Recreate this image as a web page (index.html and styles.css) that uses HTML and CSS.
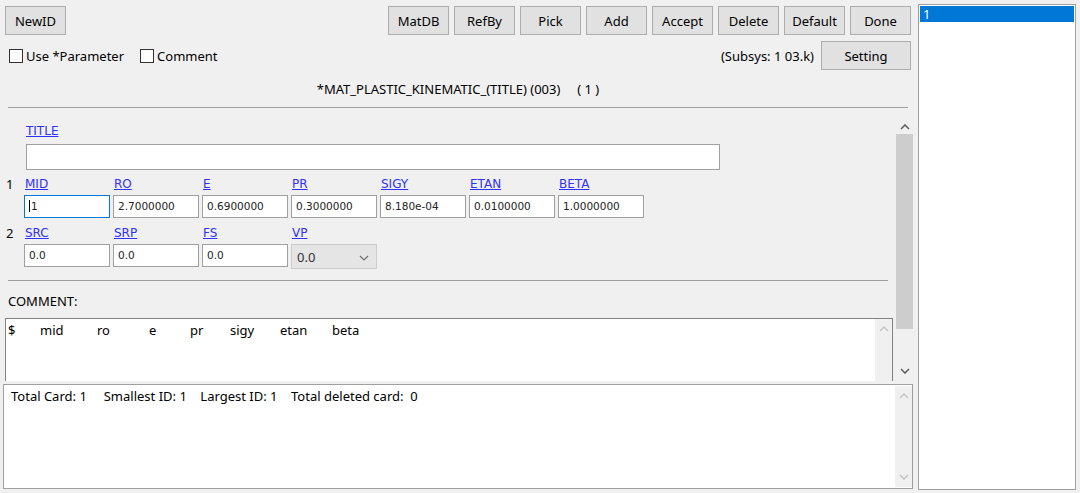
FILE: index.html
```html
<!DOCTYPE html>
<html lang="en">
<head>
    <meta charset="UTF-8">
    <meta name="viewport" content="width=device-width, initial-scale=1.0">
    <title>*MAT_PLASTIC_KINEMATIC_(TITLE)</title>
    <link rel="stylesheet" href="styles.css">
</head>
<body>
    <div class="app">
        <div class="main">
            <div class="toolbar">
                <button class="btn">NewID</button>
                <div class="btn-group">
                    <button class="btn">MatDB</button>
                    <button class="btn">RefBy</button>
                    <button class="btn">Pick</button>
                    <button class="btn">Add</button>
                    <button class="btn">Accept</button>
                    <button class="btn">Delete</button>
                    <button class="btn">Default</button>
                    <button class="btn">Done</button>
                </div>
            </div>
            <div class="options">
                <label class="check"><span class="box"></span>Use *Parameter</label>
                <label class="check"><span class="box"></span>Comment</label>
                <span class="subsys">(Subsys: 1 03.k)</span>
                <button class="btn btn-wide">Setting</button>
            </div>
            <div class="keyword">*MAT_PLASTIC_KINEMATIC_(TITLE) (003)     ( 1 )</div>
            <div class="sep"></div>

            <div class="editor">
                <div class="editor-body">
                    <div class="title-block">
                        <a href="#" class="field-link">TITLE</a>
                        <div class="field title-field"></div>
                    </div>

                    <div class="card">
                        <span class="card-num">1</span>
                        <div class="cell"><a href="#" class="field-link">MID</a><div class="field focused"><span class="caret"></span>1</div></div>
                        <div class="cell"><a href="#" class="field-link">RO</a><div class="field">2.7000000</div></div>
                        <div class="cell"><a href="#" class="field-link">E</a><div class="field">0.6900000</div></div>
                        <div class="cell"><a href="#" class="field-link">PR</a><div class="field">0.3000000</div></div>
                        <div class="cell"><a href="#" class="field-link">SIGY</a><div class="field">8.180e-04</div></div>
                        <div class="cell"><a href="#" class="field-link">ETAN</a><div class="field">0.0100000</div></div>
                        <div class="cell"><a href="#" class="field-link">BETA</a><div class="field">1.0000000</div></div>
                    </div>

                    <div class="card card-2">
                        <span class="card-num">2</span>
                        <div class="cell"><a href="#" class="field-link">SRC</a><div class="field">0.0</div></div>
                        <div class="cell"><a href="#" class="field-link">SRP</a><div class="field">0.0</div></div>
                        <div class="cell"><a href="#" class="field-link">FS</a><div class="field">0.0</div></div>
                        <div class="cell">
                            <a href="#" class="field-link">VP</a>
                            <div class="select">0.0
                                <svg class="chev" width="10" height="6" viewBox="0 0 10 6"><path d="M1 1 L5 5 L9 1" fill="none" stroke="#707070" stroke-width="1.2"/></svg>
                            </div>
                        </div>
                    </div>

                    <div class="sep sep-inner"></div>
                    <div class="comment-label">COMMENT:</div>
                    <div class="comment-box">
                        <div class="comment-text">
                            <span>$</span><span>mid</span><span>ro</span><span>e</span><span>pr</span><span>sigy</span><span>etan</span><span>beta</span>
                        </div>
                        <div class="vscroll vscroll-faint">
                            <svg class="arrow" width="10" height="6" viewBox="0 0 10 6"><path d="M1 5 L5 1 L9 5" fill="none" stroke="#c2c2c2" stroke-width="1.4"/></svg>
                        </div>
                    </div>
                </div>
                <div class="vscroll">
                    <svg class="arrow" width="10" height="6" viewBox="0 0 10 6"><path d="M1 5 L5 1 L9 5" fill="none" stroke="#606060" stroke-width="1.6"/></svg>
                    <div class="thumb"></div>
                    <svg class="arrow arrow-down" width="10" height="6" viewBox="0 0 10 6"><path d="M1 1 L5 5 L9 1" fill="none" stroke="#606060" stroke-width="1.6"/></svg>
                </div>
            </div>

            <div class="status">
                <div class="status-text">Total Card: 1     Smallest ID: 1    Largest ID: 1    Total deleted card:  0</div>
                <div class="vscroll vscroll-faint">
                    <svg class="arrow" width="10" height="6" viewBox="0 0 10 6"><path d="M1 5 L5 1 L9 5" fill="none" stroke="#c2c2c2" stroke-width="1.4"/></svg>
                    <svg class="arrow arrow-down" width="10" height="6" viewBox="0 0 10 6"><path d="M1 1 L5 5 L9 1" fill="none" stroke="#c2c2c2" stroke-width="1.4"/></svg>
                </div>
            </div>
        </div>

        <div class="id-list">
            <div class="id-item selected">1</div>
        </div>
    </div>
</body>
</html>
```

FILE: styles.css
```css
html, body {
    margin: 0;
    background-color: #f0f0f0;
}
body {
    font-family: "Noto Sans", "Open Sans", sans-serif;
    font-size: 13px;
    color: #000;
}
.app {
    display: flex;
    gap: 5px;
    height: 493px;
    padding: 4px 4px 3px 3px;
    box-sizing: border-box;
}
.main {
    width: 910px;
    display: flex;
    flex-direction: column;
}

/* buttons */
.toolbar {
    display: flex;
    justify-content: space-between;
    margin-top: 2px;
    padding: 0 2px;
}
.btn-group {
    display: flex;
    gap: 5px;
}
.btn {
    width: 61px;
    height: 29px;
    padding: 0;
    background-color: #e1e1e1;
    border: 1px solid #adadad;
    font-family: "Noto Sans", "Open Sans", sans-serif;
    font-size: 13px;
    color: #000;
}
.btn-wide {
    width: 90px;
}

/* checkboxes row */
.options {
    display: flex;
    align-items: center;
    margin-top: 6px;
    padding: 0 2px 0 6px;
}
.check {
    display: flex;
    align-items: center;
    gap: 3px;
    margin-right: 16px;
}
.box {
    width: 12px;
    height: 12px;
    border: 1px solid #333;
    background-color: #fff;
}
.subsys {
    margin-left: auto;
    margin-right: 7px;
}
.keyword {
    margin-top: 11px;
    height: 16px;
    line-height: 16px;
    text-align: center;
    white-space: pre;
}
.sep {
    height: 1px;
    margin: 10px 5px 0 5px;
    background-color: #a0a0a0;
}

/* editor area */
.editor {
    display: flex;
    height: 264px;
    margin-top: 9px;
    overflow: hidden;
}
.editor-body {
    flex: 1;
    overflow: hidden;
}
.field-link {
    display: block;
    height: 16px;
    line-height: 16px;
    font-family: "DejaVu Sans", sans-serif;
    font-size: 12px;
    color: #3030ff;
    text-decoration: underline;
}
.field {
    position: relative;
    height: 23px;
    line-height: 21px;
    padding: 0 4px;
    box-sizing: border-box;
    background-color: #fff;
    border: 1px solid #a0a0a0;
    font-family: "DejaVu Sans", sans-serif;
    font-size: 10.5px;
    color: #222;
}
.title-block {
    padding: 6px 0 0 23px;
}
.title-field {
    width: 694px;
    height: 26px;
    margin-top: 5px;
}
.card {
    display: flex;
    gap: 3px;
    margin-top: 6px;
}
.card-2 {
    margin-top: 7px;
}
.card-2 .field-link {
    margin-bottom: 4px;
}
.card-num {
    width: 15px;
    padding-left: 3px;
    line-height: 16px;
    font-size: 13px;
}
.cell {
    width: 86px;
}
.cell .field-link {
    margin-left: 1px;
    margin-bottom: 3px;
}
.field.focused {
    border-color: #0078d7;
}
.caret {
    display: inline-block;
    width: 1px;
    height: 12px;
    margin-right: 1px;
    vertical-align: -2px;
    background-color: #000;
}
.select {
    position: relative;
    height: 25px;
    line-height: 24px;
    padding: 0 5px;
    box-sizing: border-box;
    background-color: #e5e5e5;
    border: 1px solid #cccccc;
    font-size: 13px;
    color: #333;
}
.chev {
    position: absolute;
    right: 7px;
    top: 10px;
}
.sep-inner {
    margin: 11px 8px 0 5px;
}
.comment-label {
    margin-top: 12px;
    padding-left: 5px;
    height: 16px;
    line-height: 16px;
}
.comment-box {
    display: flex;
    height: 80px;
    margin: 9px 3px 0 2px;
    background-color: #fff;
    border: 1px solid #828282;
}
.comment-text {
    flex: 1;
    display: grid;
    grid-template-columns: 32px 57px 52px 41px 40px 50px 52px auto;
    align-content: start;
    padding: 3px 0 0 2px;
    line-height: 16px;
}

/* scrollbars */
.vscroll {
    width: 17px;
    display: flex;
    flex-direction: column;
    align-items: center;
    background-color: #f0f0f0;
}
.arrow {
    margin-top: 7px;
    flex-shrink: 0;
}
.thumb {
    width: 17px;
    height: 195px;
    margin-top: 4px;
    background-color: #cdcdcd;
}
.arrow-down {
    margin-top: auto;
    margin-bottom: 7px;
}

/* status */
.status {
    display: flex;
    height: 105px;
    margin-top: 3px;
    background-color: #fff;
    border: 1px solid #a0a0a0;
    box-sizing: border-box;
}
.status-text {
    flex: 1;
    padding: 3px 0 0 7px;
    line-height: 16px;
    white-space: pre;
}
.status .vscroll-faint {
    margin: 1px 0;
}

/* right id list */
.id-list {
    flex: 1;
    padding: 1px;
    background-color: #fff;
    border: 1px solid #a0a0a0;
    box-sizing: border-box;
}
.id-item {
    height: 16px;
    line-height: 16px;
    padding-left: 3px;
}
.id-item.selected {
    background-color: #0078d7;
    color: #fff;
}
```
